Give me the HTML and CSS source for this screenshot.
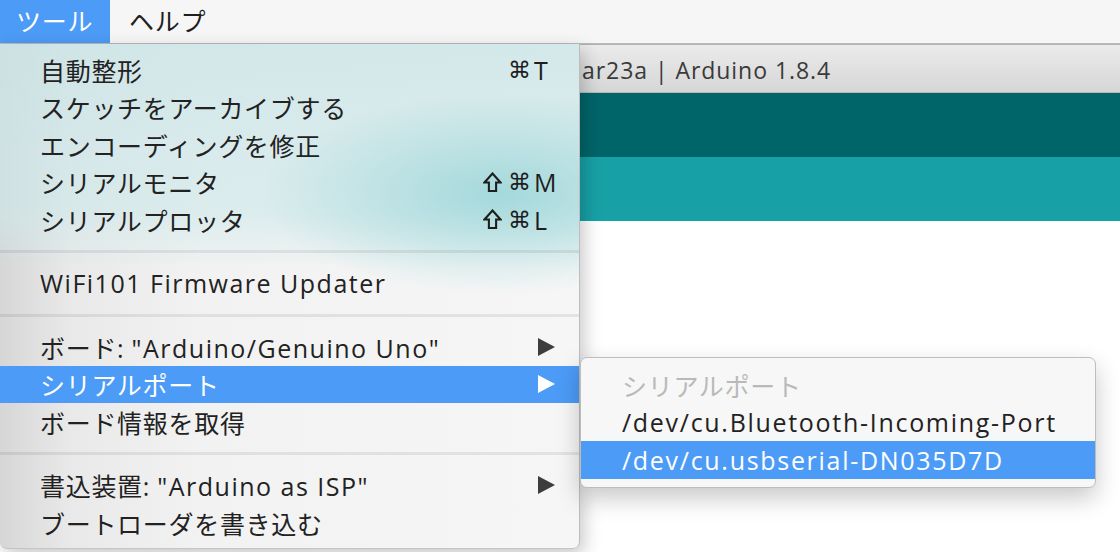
FILE: index.html
```html
<!DOCTYPE html>
<html lang="ja">
<head>
<meta charset="utf-8">
<title>Arduino ツール menu</title>
<link rel="stylesheet" href="styles.css">
</head>
<body>
<div class="screen">
  <div class="menubar">
    <div class="mb-item active">ツール</div>
    <div class="mb-item">ヘルプ</div>
  </div>

  <div class="window">
    <div class="titlebar"><span class="title-pre">sketch_m</span><span class="title">ar23a | Arduino 1.8.4</span></div>
    <div class="toolbar"></div>
    <div class="tabs"></div>
    <div class="editor"></div>
  </div>

  <div class="menu">
    <div class="row"><span class="label">自動整形</span><span class="sc"><span class="mods">⌘</span><span class="key">T</span></span></div>
    <div class="row"><span class="label">スケッチをアーカイブする</span></div>
    <div class="row"><span class="label">エンコーディングを修正</span></div>
    <div class="row"><span class="label">シリアルモニタ</span><span class="sc"><span class="mods"><svg class="shift" viewBox="0 0 20 22" width="19" height="21"><path d="M10 1.5 L18.5 11 H13.8 V20 H6.2 V11 H1.5 Z" fill="none" stroke="currentColor" stroke-width="2.2" stroke-linejoin="miter"/></svg>⌘</span><span class="key">M</span></span></div>
    <div class="row"><span class="label">シリアルプロッタ</span><span class="sc"><span class="mods"><svg class="shift" viewBox="0 0 20 22" width="19" height="21"><path d="M10 1.5 L18.5 11 H13.8 V20 H6.2 V11 H1.5 Z" fill="none" stroke="currentColor" stroke-width="2.2" stroke-linejoin="miter"/></svg>⌘</span><span class="key">L</span></span></div>
    <div class="sep"></div>
    <div class="row"><span class="label en">WiFi101 Firmware Updater</span></div>
    <div class="sep"></div>
    <div class="row"><span class="label">ボード: <span class="en">"Arduino/Genuino Uno"</span></span><span class="arrow"></span></div>
    <div class="row selected"><span class="label">シリアルポート</span><span class="arrow"></span></div>
    <div class="row"><span class="label">ボード情報を取得</span></div>
    <div class="sep"></div>
    <div class="row"><span class="label">書込装置: <span class="en">"Arduino as ISP"</span></span><span class="arrow"></span></div>
    <div class="row"><span class="label">ブートローダを書き込む</span></div>
  </div>

  <div class="submenu">
    <div class="srow disabled">シリアルポート</div>
    <div class="srow path">/dev/cu.Bluetooth-Incoming-Port</div>
    <div class="srow path selected">/dev/cu.usbserial-DN035D7D</div>
  </div>
</div>
</body>
</html>
```

FILE: styles.css
```css
* { box-sizing: border-box; }
html, body {
  margin: 0;
  padding: 0;
  width: 1120px;
  height: 552px;
  overflow: hidden;
  background: #ffffff;
}
.screen {
  position: relative;
  width: 1120px;
  height: 552px;
  overflow: hidden;
  font-family: "Open Sans", "Noto Sans CJK JP", sans-serif;
  font-size: 25px;
  letter-spacing: 0.7px;
  color: #222222;
}
.en { letter-spacing: 1.5px; }

/* top menu bar */
.menubar {
  display: flex;
  height: 44px;
  background: #f6f6f6;
  border-bottom: 1px solid #b9b9b9;
}
.mb-item {
  display: flex;
  align-items: center;
  padding: 0 17px 0 16px;
  color: #1e1e1e;
  line-height: 1;
  white-space: nowrap;
}
.mb-item.active {
  background: #4c9bf6;
  color: #ffffff;
  width: 110px;
  padding-right: 0;
}
.mb-item + .mb-item { padding-left: 19px; }

/* background Arduino window */
.window {
  display: flex;
  flex-direction: column;
  height: 508px;
}
.titlebar {
  height: 49px;
  border-top: 1px solid #b2b2b2;
  border-bottom: 1px solid #b8b8b8;
  background: linear-gradient(#ebebeb, #d6d6d6);
  display: flex;
  align-items: center;
  padding-top: 2px;
  font-size: 23px;
  letter-spacing: 0.95px;
  color: #3a3a3a;
  white-space: nowrap;
}
.title-pre {
  width: 582px;
  overflow: hidden;
  text-align: right;
  flex: none;
}
.toolbar {
  height: 64px;
  background: #006569;
}
.tabs {
  height: 64px;
  background: #17a1a6;
}
.editor {
  flex: 1;
  background: #ffffff;
}

/* drop-down menu */
.menu {
  position: absolute;
  left: 0;
  top: 44px;
  width: 580px;
  height: 505px;
  padding-top: 7px;
  border-right: 1px solid #bdbdbd;
  border-bottom: 1px solid #c4c4c4;
  border-radius: 0 0 7px 7px;
  box-shadow: 4px 6px 18px rgba(0, 0, 0, 0.22);
  background:
    radial-gradient(ellipse 240px 100px at 500px 150px, rgba(150, 212, 215, 0.8), rgba(150, 212, 215, 0) 100%),
    linear-gradient(to bottom, rgba(200, 228, 230, 0.75) 0, rgba(205, 232, 234, 0.6) 170px, rgba(225, 240, 241, 0) 225px),
    linear-gradient(to right, #d6d6d6 0, #e9e9e9 70px, #f2f2f2 200px, #f6f6f6 100%);
  overflow: hidden;
}
.row {
  height: 37.5px;
  display: flex;
  align-items: center;
  padding: 0 24px 0 40px;
  color: #222222;
}
.row .label { flex: 1; white-space: nowrap; }
.row.selected {
  background: #4c9bf6;
  color: #ffffff;
}
.sc {
  display: flex;
  align-items: center;
  margin-right: -1px;
  color: #1e1e1e;
}
.sc .mods {
  display: flex;
  align-items: center;
  justify-content: flex-end;
  gap: 6px;
  width: 60px;
  padding-right: 3px;
  font-family: "DejaVu Sans", sans-serif;
  font-size: 23px;
  letter-spacing: 0;
}
.shift { display: block; }
.sc .key {
  width: 22px;
  letter-spacing: 0;
}
.arrow {
  width: 0;
  height: 0;
  border-top: 9px solid transparent;
  border-bottom: 9px solid transparent;
  border-left: 17px solid #3d3d3d;
}
.row.selected .arrow { border-left-color: #ffffff; }
.sep {
  height: 26px;
  display: flex;
  align-items: center;
}
.sep::before {
  content: "";
  display: block;
  width: 100%;
  height: 3px;
  background: rgba(0, 0, 0, 0.075);
}

/* submenu */
.submenu {
  position: absolute;
  left: 580px;
  top: 357px;
  width: 516px;
  padding: 8px 0 8px;
  background: #f7f7f7;
  border: 1px solid #bdbdbd;
  border-radius: 7px;
  box-shadow: 0 10px 24px rgba(0, 0, 0, 0.22);
  overflow: hidden;
}
.srow {
  height: 37.5px;
  display: flex;
  align-items: center;
  padding-left: 41px;
  white-space: nowrap;
  color: #222222;
}
.srow.path { letter-spacing: 1.7px; }
.srow.disabled { color: #b9b9b9; }
.srow.selected { background: #4c9bf6; color: #ffffff; }
```
